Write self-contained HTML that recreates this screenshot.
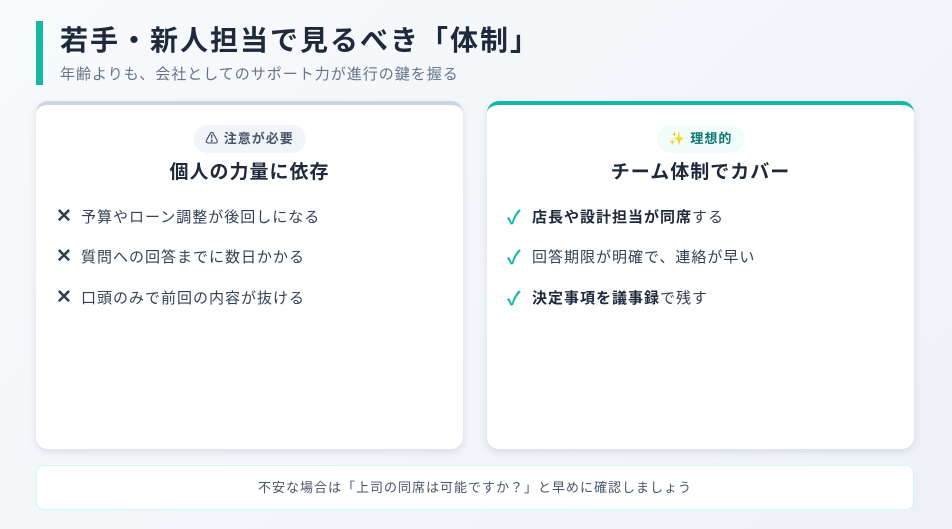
<!DOCTYPE html>
<html><head><meta charset="utf-8"><style>
*{margin:0;padding:0;box-sizing:border-box}
body{width:952px;height:529px;background:linear-gradient(135deg,#f8fafc,#eef2f8);font-family:"Liberation Sans","Noto Sans CJK JP",sans-serif;color:#1e293b;position:relative;overflow:hidden}
.bar{position:absolute;left:36px;top:21px;width:7px;height:64px;background:#14b8a6}
h1{position:absolute;left:60px;top:19px;font-size:28px;font-weight:700;color:#1e293b;letter-spacing:2px}
.sub{position:absolute;left:60px;top:63px;font-size:15px;color:#64748b;letter-spacing:1px}
.card{position:absolute;top:101px;width:427px;height:348px;background:#fff;border-radius:12px;border-top:4px solid #cbd5e1;box-shadow:0 3px 8px rgba(100,116,139,.18)}
.l{left:36px}.r{left:487px;border-top-color:#14b8a6}
.badge{position:absolute;top:20px;left:50%;transform:translateX(-50%);height:28px;padding:0 12px;border-radius:14px;font-size:13px;font-weight:700;line-height:28px;white-space:nowrap;letter-spacing:1px}
.l .badge{background:#f1f5f9;color:#475569}
.r .badge{background:#f0fdfa;color:#0f766e}
.ct{position:absolute;top:52px;width:100%;text-align:center;font-size:19px;font-weight:700;color:#1e293b;letter-spacing:1px}
ul{list-style:none;position:absolute;top:91px;left:20px}
li{height:40.5px;font-size:15px;color:#334155;display:flex;align-items:center;white-space:nowrap;letter-spacing:1px}
li span.i{width:25px;font-size:19px;font-weight:700;display:inline-block;letter-spacing:0}
.l li span.i{color:#334155}
.r li span.i{color:#14b8a6}
b{font-weight:700;color:#1e293b}
.foot{position:absolute;left:36px;top:465px;width:878px;height:45px;background:#fff;border:1px solid #ccfbf1;border-radius:8px;text-align:center;line-height:43px;font-size:13px;color:#475569;letter-spacing:1px}
</style></head><body>
<div class="bar"></div>
<h1>若手・新人担当で見るべき「体制」</h1>
<div class="sub">年齢よりも、会社としてのサポート力が進行の鍵を握る</div>
<div class="card l">
<div class="badge">⚠ 注意が必要</div>
<div class="ct">個人の力量に依存</div>
<ul>
<li><span class="i">✕</span>予算やローン調整が後回しになる</li>
<li><span class="i">✕</span>質問への回答までに数日かかる</li>
<li><span class="i">✕</span>口頭のみで前回の内容が抜ける</li>
</ul></div>
<div class="card r">
<div class="badge"><span style="color:#f59e0b">✨</span> 理想的</div>
<div class="ct">チーム体制でカバー</div>
<ul>
<li><span class="i">✓</span><b>店長や設計担当が同席</b>する</li>
<li><span class="i">✓</span>回答期限が明確で、連絡が早い</li>
<li><span class="i">✓</span><b>決定事項を議事録</b>で残す</li>
</ul></div>
<div class="foot">不安な場合は「上司の同席は可能ですか？」と早めに確認しましょう</div>
</body></html>
